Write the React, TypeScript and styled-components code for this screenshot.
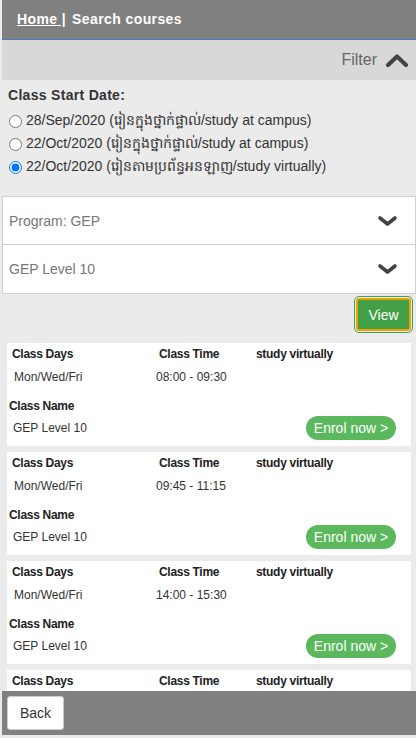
import styled, { createGlobalStyle } from "styled-components"

const GlobalStyle = createGlobalStyle`
  html, body {
    margin: 0;
    padding: 0;
    background: #ebebeb;
    font-family: "Liberation Sans", Arial, "Noto Sans", sans-serif;
    color: #333;
  }
  * { box-sizing: border-box; }
`

const Page = styled.div`
  padding: 0 0 50px 2px;
  min-height: 738px;
`

const Header = styled.div`
  height: 40px;
  background: #808080;
  border-bottom: 1px solid #4a7fc0;
  display: flex;
  align-items: center;
  padding: 0 0 2px 15px;
  color: #fff;
  font-weight: bold;
  font-size: 14px;
  letter-spacing: 0.4px;
  a {
    color: #fff;
    text-decoration: underline;
    margin-right: 6px;
  }
`

const FilterBar = styled.div`
  height: 40px;
  background: #d8d8d8;
  display: flex;
  align-items: center;
  justify-content: flex-end;
  gap: 8px;
  padding-right: 7px;
  color: #666;
  font-size: 16px;
`

const DateSection = styled.div`
  padding: 7px 6px 17px 6px;
  h4 {
    margin: 0 0 7px 0;
    font-size: 14px;
    font-weight: bold;
    color: #333;
    letter-spacing: 0.3px;
  }
`

const RadioRow = styled.label`
  display: flex;
  align-items: center;
  height: 23px;
  font-size: 14px;
  color: #333;
  input {
    margin: 0 4px 0 1px;
    width: 13px;
    height: 13px;
  }
`

const SelectBox = styled.div<{ $first?: boolean }>`
  height: 49px;
  background: #fff;
  border: 1px solid #cfcfcf;
  border-top: ${p => (p.$first ? "1px solid #cfcfcf" : "none")};
  display: flex;
  align-items: center;
  justify-content: space-between;
  padding: 0 17px 0 6px;
  font-size: 14px;
  color: #777;
`

const ViewRow = styled.div`
  display: flex;
  justify-content: flex-end;
  padding: 4px 5px 12px 0;
`

const ViewButton = styled.button`
  height: 33px;
  width: 55px;
  background: #43a047;
  border: 2px solid #f0a000;
  outline: 1px solid #43a047;
  outline-offset: 1px;
  border-radius: 3px;
  color: #fff;
  font-family: inherit;
  font-size: 14px;
`

const CardList = styled.div`
  display: flex;
  flex-direction: column;
  gap: 6px;
  padding: 0 5px;
`

const Card = styled.div`
  background: #fff;
  height: 103px;
  font-size: 12px;
`

const InfoRow = styled.div<{ $bold?: boolean }>`
  display: grid;
  grid-template-columns: 152px 97px 1fr;
  height: ${p => (p.$bold ? "22px" : "23px")};
  align-items: center;
  font-weight: ${p => (p.$bold ? "bold" : "normal")};
  letter-spacing: ${p => (p.$bold ? "-0.3px" : "0")};
  color: ${p => (p.$bold ? "#222" : "#333")};
  span:nth-child(1) { padding-left: ${p => (p.$bold ? "5px" : "7px")}; }
  span:nth-child(2) { margin-left: ${p => (p.$bold ? "0" : "-3px")}; }
`

const NameLabel = styled.div`
  margin-top: 6px;
  height: 23px;
  display: flex;
  align-items: center;
  padding-left: 2px;
  font-weight: bold;
  letter-spacing: -0.3px;
  color: #222;
`

const NameRow = styled.div`
  display: flex;
  align-items: center;
  justify-content: space-between;
  height: 22px;
  padding: 0 15px 0 6px;
  color: #333;
`

const EnrolButton = styled.button`
  height: 24px;
  width: 90px;
  border: none;
  border-radius: 12px;
  background: #5cb85c;
  color: #fff;
  font-family: inherit;
  font-size: 14px;
  padding: 0;
`

const Footer = styled.div`
  position: fixed;
  left: 0;
  right: 0;
  bottom: 0;
  height: 47px;
  background: #808080;
  border-left: 2px solid #ebebeb;
  border-bottom: 3px solid #ebebeb;
  display: flex;
  align-items: center;
  padding-left: 5px;
`

const BackButton = styled.button`
  height: 34px;
  width: 57px;
  background: #fff;
  border: 1px solid #ccc;
  border-radius: 3px;
  font-family: inherit;
  font-size: 14px;
  color: #333;
`

function Chevron({ up }: { up?: boolean }) {
  return up ? (
    <svg width="24" height="15" viewBox="0 0 24 15">
      <polyline points="3,12 12,3.5 21,12" fill="none" stroke="#444" strokeWidth="4.2" strokeLinecap="round" strokeLinejoin="round" />
    </svg>
  ) : (
    <svg width="21" height="12" viewBox="0 0 21 12">
      <polyline points="3,3 10.5,9 18,3" fill="none" stroke="#444" strokeWidth="3.6" strokeLinecap="round" strokeLinejoin="round" />
    </svg>
  )
}

const classes = [
  { days: "Mon/Wed/Fri", time: "08:00 - 09:30" },
  { days: "Mon/Wed/Fri", time: "09:45 - 11:15" },
  { days: "Mon/Wed/Fri", time: "14:00 - 15:30" },
  { days: "Mon/Wed/Fri", time: "15:45 - 17:15" },
]

const dates = [
  { label: "28/Sep/2020 (រៀនក្នុងថ្នាក់ផ្ទាល់/study at campus)", checked: false },
  { label: "22/Oct/2020 (រៀនក្នុងថ្នាក់ផ្ទាល់/study at campus)", checked: false },
  { label: "22/Oct/2020 (រៀនតាមប្រព័ន្ធអនឡាញ/study virtually)", checked: true },
]

function App() {
  return (
    <Page>
      <GlobalStyle />
      <Header>
        <a href="#">Home |</a> Search courses
      </Header>
      <FilterBar>
        Filter <Chevron up />
      </FilterBar>
      <DateSection>
        <h4>Class Start Date:</h4>
        {dates.map((d, i) => (
          <RadioRow key={i}>
            <input type="radio" name="start" defaultChecked={d.checked} />
            {d.label}
          </RadioRow>
        ))}
      </DateSection>
      <SelectBox $first>
        Program: GEP <Chevron />
      </SelectBox>
      <SelectBox>
        GEP Level 10 <Chevron />
      </SelectBox>
      <ViewRow>
        <ViewButton>View</ViewButton>
      </ViewRow>
      <CardList>
        {classes.map((c, i) => (
          <Card key={i}>
            <InfoRow $bold>
              <span>Class Days</span>
              <span>Class Time</span>
              <span>study virtually</span>
            </InfoRow>
            <InfoRow>
              <span>{c.days}</span>
              <span>{c.time}</span>
              <span></span>
            </InfoRow>
            <NameLabel>Class Name</NameLabel>
            <NameRow>
              GEP Level 10
              <EnrolButton>Enrol now &gt;</EnrolButton>
            </NameRow>
          </Card>
        ))}
      </CardList>
      <Footer>
        <BackButton>Back</BackButton>
      </Footer>
    </Page>
  )
}

export default App
